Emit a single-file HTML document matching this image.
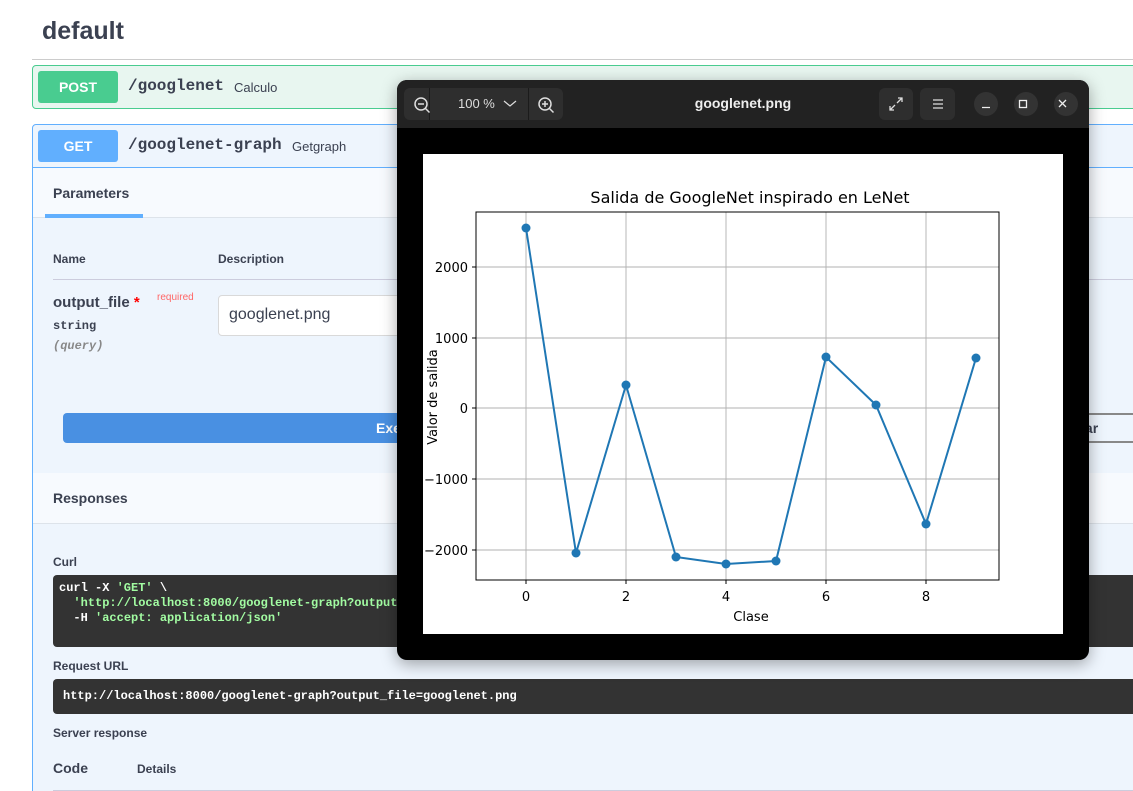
<!DOCTYPE html>
<html><head><meta charset="utf-8"><style>
*{box-sizing:border-box;margin:0;padding:0}
html,body{width:1133px;height:791px;overflow:hidden}
body{background:#fff;font-family:"Liberation Sans",sans-serif;color:#3b4151;position:relative}
.abs{position:absolute}
.b{font-weight:bold}
.mono{font-family:"Liberation Mono",monospace}
</style></head><body>
<div class="abs b" style="left:42px;top:17px;font-size:25px">default</div>
<div class="abs" style="left:32px;top:59px;width:1101px;height:1px;background:#ccc"></div>
<!-- POST -->
<div class="abs" style="left:32px;top:65px;width:1110px;height:44px;background:#e8f6f0;border:1px solid #49cc90;border-radius:4px"></div>
<div class="abs b" style="left:38px;top:71px;width:80px;height:32px;background:#49cc90;border-radius:3px;color:#fff;font-size:14px;text-align:center;line-height:32px">POST</div>
<div class="abs b mono" style="left:128px;top:77px;font-size:16px">/googlenet</div>
<div class="abs" style="left:234px;top:80px;font-size:13px">Calculo</div>
<!-- GET -->
<div class="abs" style="left:32px;top:124px;width:1110px;height:700px;background:#eef5fd;border:1px solid #61affe;border-radius:4px"></div>
<div class="abs" style="left:33px;top:167px;width:1100px;height:1px;background:#61affe"></div>
<div class="abs b" style="left:38px;top:130px;width:80px;height:32px;background:#61affe;border-radius:3px;color:#fff;font-size:14px;text-align:center;line-height:32px">GET</div>
<div class="abs b mono" style="left:128px;top:136px;font-size:16px">/googlenet-graph</div>
<div class="abs" style="left:292px;top:139px;font-size:13px">Getgraph</div>
<div class="abs" style="left:33px;top:168px;width:1100px;height:50px;background:#f7fafe;border-bottom:1px solid #dde3ea"></div>
<div class="abs b" style="left:53px;top:185px;font-size:14px">Parameters</div>
<div class="abs" style="left:45px;top:214px;width:98px;height:4px;background:#61affe"></div>
<div class="abs b" style="left:53px;top:252px;font-size:12px">Name</div>
<div class="abs b" style="left:218px;top:252px;font-size:12px">Description</div>
<div class="abs" style="left:53px;top:279px;width:1080px;height:1px;background:#ccd"></div>
<div class="abs b" style="left:53px;top:294px;font-size:15px">output_file <span style="color:#f00">*</span></div>
<div class="abs" style="left:157px;top:292px;font-size:10px;color:#f66">required</div>
<div class="abs b mono" style="left:53px;top:319px;font-size:12px">string</div>
<div class="abs b mono" style="left:53px;top:339px;font-size:12px;font-style:italic;color:#888">(query)</div>
<div class="abs" style="left:218px;top:295px;width:300px;height:41px;background:#fff;border:1px solid #d9d9d9;border-radius:4px;font-size:16px;padding:10px">googlenet.png</div>
<div class="abs" style="left:63px;top:413px;width:1000px;height:30px;background:#4990e2;border-radius:4px;color:#fff;font-size:14px;padding:7px 313px" ><b>Execute</b></div>
<div class="abs" style="left:1060px;top:413px;width:80px;height:30px;border-top:2px solid #888;border-bottom:2px solid #888"></div>
<div class="abs b" style="left:1039px;top:420px;font-size:14px;color:#3b4151">Cancelar</div>
<div class="abs" style="left:33px;top:473px;width:1100px;height:51px;background:#f7fafe;border-bottom:1px solid #dde3ea"></div>
<div class="abs b" style="left:53px;top:490px;font-size:14px">Responses</div>
<div class="abs b" style="left:53px;top:555px;font-size:12px">Curl</div>
<div class="abs mono b" style="left:53px;top:575px;width:1090px;height:72px;background:#333;border-radius:4px;color:#fff;font-size:12px;padding:6px 6px;line-height:15px;white-space:pre">curl -X <span style="color:#a2fca2">'GET'</span> \
  <span style="color:#a2fca2">'http://localhost:8000/googlenet-graph?output_file=googlenet.png'</span> \
  -H <span style="color:#a2fca2">'accept: application/json'</span></div>
<div class="abs b" style="left:53px;top:659px;font-size:12px">Request URL</div>
<div class="abs mono b" style="left:53px;top:679px;width:1090px;height:35px;background:#333;border-radius:4px;color:#fff;font-size:12px;padding:10px">http://localhost:8000/googlenet-graph?output_file=googlenet.png</div>
<div class="abs b" style="left:53px;top:726px;font-size:12px">Server response</div>
<div class="abs b" style="left:53px;top:760px;font-size:14px">Code</div>
<div class="abs b" style="left:137px;top:762px;font-size:12px">Details</div>
<div class="abs" style="left:53px;top:790px;width:1080px;height:1px;background:#ccd"></div>

<!-- viewer window -->
<div class="abs" style="left:397px;top:80px;width:692px;height:580px;background:#000;border-radius:10px;box-shadow:0 4px 16px rgba(0,0,0,.35);overflow:hidden">
 <div class="abs" style="left:0;top:0;width:692px;height:48px;background:#222"></div>
 <div class="abs" style="left:7px;top:8px;width:159px;height:32px;background:#2e2e2e;border-radius:6px"></div>
 <div class="abs" style="left:32px;top:8px;width:1px;height:32px;background:#1b1b1b"></div>
 <div class="abs" style="left:131px;top:8px;width:1px;height:32px;background:#1b1b1b"></div>
 <svg class="abs" style="left:16px;top:16px" width="18" height="18" fill="none" stroke="#ddd" stroke-width="1.5"><circle cx="8" cy="8" r="6"/><path d="M5 8h6M12.5 12.5l4 4"/></svg>
 <svg class="abs" style="left:140px;top:16px" width="18" height="18" fill="none" stroke="#ddd" stroke-width="1.5"><circle cx="8" cy="8" r="6"/><path d="M5 8h6M8 5v6M12.5 12.5l4 4"/></svg>
 <div class="abs" style="left:61px;top:16px;color:#ddd;font-size:13px">100 %</div>
 <svg class="abs" style="left:106px;top:20px" width="14" height="8" fill="none" stroke="#ddd" stroke-width="1.2"><path d="M1 1l6 5 6-5"/></svg>
 <div class="abs b" style="left:0;width:692px;top:15px;text-align:center;color:#eee;font-size:14px">googlenet.png</div>
 <div class="abs" style="left:482px;top:8px;width:34px;height:32px;background:#2e2e2e;border-radius:6px"></div>
 <svg class="abs" style="left:491px;top:16px" width="16" height="16" fill="none" stroke="#ddd" stroke-width="1.3"><path d="M2 14l5-5M2 10v4h4M14 2l-5 5M10 2h4v4"/></svg>
 <div class="abs" style="left:523px;top:8px;width:35px;height:32px;background:#2e2e2e;border-radius:6px"></div>
 <svg class="abs" style="left:534px;top:17px" width="14" height="14" stroke="#ddd" stroke-width="1.3"><path d="M2 3h10M2 7h10M2 11h10"/></svg>
 <div class="abs" style="left:577px;top:12px;width:24px;height:24px;background:#333;border-radius:50%"></div>
 <div class="abs" style="left:617px;top:12px;width:24px;height:24px;background:#333;border-radius:50%"></div>
 <div class="abs" style="left:657px;top:12px;width:24px;height:24px;background:#333;border-radius:50%"></div>
 <svg class="abs" style="left:577px;top:12px" width="104" height="24" fill="none" stroke="#eee" stroke-width="1.3"><path d="M8 15.5h8"/><rect x="45.5" y="8.5" width="7" height="7"/><path d="M85 8l7 7M92 8l-7 7"/></svg>
 <div class="abs" style="left:26px;top:74px;width:640px;height:480px;background:#fff">
  <svg width="640" height="480" font-family="DejaVu Sans,sans-serif" font-size="13">
   <g transform="translate(-423,-154)">
    <text x="750" y="203" font-size="16" text-anchor="middle">Salida de GoogleNet inspirado en LeNet</text>
    <g stroke="#b0b0b0" stroke-width="0.9">
     <path d="M526 212V580M626 212V580M726 212V580M826 212V580M926 212V580M476 267H999M476 338H999M476 408H999M476 479H999M476 550H999"/>
    </g>
    <rect x="476" y="212" width="523" height="368" fill="none" stroke="#000" stroke-width="1"/>
    <g stroke="#000"><path d="M526 580v4M626 580v4M726 580v4M826 580v4M926 580v4M476 267h-4M476 338h-4M476 408h-4M476 479h-4M476 550h-4"/></g>
    <g text-anchor="middle"><text x="526" y="601">0</text><text x="626" y="601">2</text><text x="726" y="601">4</text><text x="826" y="601">6</text><text x="926" y="601">8</text><text x="751" y="621">Clase</text></g>
    <g text-anchor="end"><text x="468" y="272">2000</text><text x="468" y="343">1000</text><text x="468" y="413">0</text><text x="468" y="484">−1000</text><text x="468" y="555">−2000</text></g>
    <text transform="translate(437,397) rotate(-90)" text-anchor="middle">Valor de salida</text>
    <polyline fill="none" stroke="#1f77b4" stroke-width="2" points="526,228 576,553 626,385 676,557 726,564 776,561 826,357 876,405 926,524 976,358"/>
    <g fill="#1f77b4"><circle cx="526" cy="228" r="4.5"/><circle cx="576" cy="553" r="4.5"/><circle cx="626" cy="385" r="4.5"/><circle cx="676" cy="557" r="4.5"/><circle cx="726" cy="564" r="4.5"/><circle cx="776" cy="561" r="4.5"/><circle cx="826" cy="357" r="4.5"/><circle cx="876" cy="405" r="4.5"/><circle cx="926" cy="524" r="4.5"/><circle cx="976" cy="358" r="4.5"/></g>
   </g>
  </svg>
 </div>
</div>
</body></html>
